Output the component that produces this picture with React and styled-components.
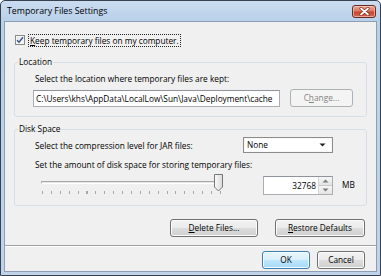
import React from "react";
import styled, { createGlobalStyle, css } from "styled-components";

const Global = createGlobalStyle`
  html, body { margin: 0; padding: 0; background: #ffffff; }
  body {
    font-family: "Open Sans", "Noto Sans", sans-serif;
    font-size: 8.3px;
    color: #000;
  }
  * { box-sizing: border-box; }
`;

const Window = styled.div`
  width: 381px;
  height: 276px;
  border: 1px solid #38414d;
  border-radius: 5px 5px 0 0;
  background: linear-gradient(#cadcf0 0px, #b9d0ea 20px, #bfd4eb 100%);
  padding: 0 3px 3px;
  display: flex;
  flex-direction: column;
  overflow: hidden;
`;

const TitleBar = styled.div`
  height: 20px;
  flex: none;
  display: flex;
  align-items: center;
  justify-content: space-between;
  padding-left: 3px;
`;

const Title = styled.span`
  font-size: 8.8px;
  color: #000;
  line-height: 12px;
`;

const CloseButton = styled.div`
  width: 24px;
  height: 13px;
  margin-right: 1px;
  border: 1px solid #6e2a20;
  border-radius: 3px;
  background: linear-gradient(#e8a898 0%, #d97966 45%, #c5452f 55%, #d16a50 100%);
  box-shadow: inset 0 0 0 1px rgba(255, 220, 210, 0.55);
  display: flex;
  align-items: center;
  justify-content: center;
`;

const Client = styled.div`
  flex: 1;
  background: #f0f0f0;
  border: 1px solid #8e9fb4;
  display: flex;
  flex-direction: column;
`;

const CheckRow = styled.div`
  margin: 11px 0 0 10px;
  height: 14px;
  display: flex;
  align-items: center;
`;

const CheckBox = styled.span`
  width: 10px;
  height: 10px;
  border: 1px solid #8b8b8b;
  background: linear-gradient(135deg, #e2e2e2, #fbfbfb);
  box-shadow: inset 0 0 0 1px #f6f6f6;
  display: flex;
  align-items: center;
  justify-content: center;
  margin-right: 3px;
`;

const FocusLabel = styled.span`
  border: 1px dotted #222;
  padding: 0 1px;
  line-height: 11px;
`;

const Group = styled.fieldset`
  margin: ${(p) => p.$top}px 9px 0;
  border: 1px solid #d5dfe5;
  border-radius: 3px;
  padding: 0 0 ${(p) => p.$bottom}px 0;
  min-width: 0;
`;

const Legend = styled.legend`
  margin-left: 3px;
  padding: 0 1px;
  line-height: 12px;
`;

const GroupBody = styled.div`
  padding-left: 18px;
  display: flex;
  flex-direction: column;
`;

const Line = styled.div`
  margin-top: ${(p) => p.$top || 0}px;
  padding-left: 2px;
  line-height: 12px;
  height: 12px;
  white-space: nowrap;
`;

const FieldRow = styled.div`
  margin-top: 4px;
  display: flex;
  align-items: center;
`;

const TextField = styled.div`
  width: 247px;
  height: 17px;
  border: 1px solid #abadb3;
  border-top-color: #8f949c;
  background: #fff;
  padding-left: 2px;
  line-height: 15px;
  white-space: nowrap;
  overflow: hidden;
`;

const buttonBase = css`
  height: 18px;
  border-radius: 3px;
  display: flex;
  align-items: center;
  justify-content: center;
  line-height: 12px;
  white-space: nowrap;
`;

const Button = styled.div`
  ${buttonBase};
  width: ${(p) => p.$w}px;
  margin-left: ${(p) => p.$ml || 0}px;
  border: 1px solid #707070;
  background: linear-gradient(#f2f2f2 0%, #ebebeb 48%, #dddddd 52%, #cfcfcf 100%);
  box-shadow: inset 0 0 0 1px #fcfcfc;
  color: #000;
  ${(p) =>
    p.$default &&
    css`
      border-color: #3c7fb1;
      background: linear-gradient(#eaf6fd 0%, #d9f0fc 48%, #bee6fd 52%, #a7d9f5 100%);
      box-shadow: inset 0 0 0 1px #f3fbff;
    `}
  ${(p) =>
    p.$disabled &&
    css`
      border-color: #adb2b5;
      background: #f4f4f4;
      box-shadow: none;
      color: #838383;
    `}
`;

const CompressionRow = styled.div`
  margin-top: 2px;
  height: 16px;
  display: flex;
  align-items: center;
`;

const RowLabel = styled.span`
  width: 210px;
  padding-left: 2px;
  white-space: nowrap;
`;

const Select = styled.div`
  width: 90px;
  height: 16px;
  border: 1px solid #8c8c8c;
  background: #fff;
  box-shadow: inset 0 0 0 1px #f8f8f8;
  display: flex;
  align-items: center;
  justify-content: space-between;
  padding: 0 6px 0 3px;
  line-height: 12px;
`;

const SliderRow = styled.div`
  margin-top: 2px;
  height: 22px;
  display: flex;
  align-items: flex-start;
`;

const Slider = styled.div`
  position: relative;
  width: 190px;
  height: 22px;
  margin-left: 5px;
  flex: none;
`;

const Track = styled.div`
  position: absolute;
  left: 3px;
  top: 8px;
  width: 182px;
  height: 3px;
  border-top: 1px solid #a9a9a9;
  border-left: 1px solid #b8b8b8;
  background: #e6e6e6;
  border-bottom: 1px solid #ffffff;
`;

const Ticks = styled.div`
  position: absolute;
  left: 4px;
  top: 18px;
  width: 179px;
  height: 3px;
  background: repeating-linear-gradient(
    to right,
    #a8a8a8 0px,
    #a8a8a8 1px,
    transparent 1px,
    transparent 8.9px
  );
`;

const Thumb = styled.svg`
  position: absolute;
  left: 176px;
  top: 1px;
`;

const Spin = styled.div`
  margin-left: 35px;
  margin-top: 3px;
  width: 70px;
  height: 19px;
  border: 1px solid #abadb3;
  border-top-color: #8f949c;
  background: #fff;
  display: flex;
`;

const SpinValue = styled.div`
  flex: 1;
  text-align: right;
  padding-right: 2px;
  line-height: 17px;
`;

const SpinButtons = styled.div`
  width: 14px;
  display: flex;
  flex-direction: column;
  border-left: 1px solid #d6d6d6;
`;

const SpinHalf = styled.div`
  flex: 1;
  display: flex;
  align-items: center;
  justify-content: center;
  background: linear-gradient(#f6f6f6, #e4e4e4);
  border-bottom: ${(p) => (p.$top ? "1px solid #c8c8c8" : "none")};
`;

const Unit = styled.span`
  margin: 6px 0 0 9px;
  line-height: 12px;
`;

const ActionRow = styled.div`
  margin-top: ${(p) => p.$top}px;
  padding-right: 11px;
  display: flex;
  justify-content: flex-end;
`;

const Separator = styled.div`
  margin-top: 8px;
  border-top: 1px solid #a0a0a0;
  border-bottom: 1px solid #ffffff;
`;

const Check = () => (
  <svg width="8" height="8" viewBox="0 0 8 8">
    <path d="M1 4.2 L3 6.3 L7 1.3" fill="none" stroke="#3a5390" strokeWidth="1.4" />
  </svg>
);

const CloseX = () => (
  <svg width="11" height="9" viewBox="0 0 11 9">
    <path d="M2 1.5 L9 7.5 M9 1.5 L2 7.5" stroke="#7a2a1f" strokeWidth="3" strokeLinecap="round" />
    <path d="M2 1.5 L9 7.5 M9 1.5 L2 7.5" stroke="#ffffff" strokeWidth="1.7" strokeLinecap="round" />
  </svg>
);

const Caret = ({ up, down }) => (
  <svg width="7" height="4" viewBox="0 0 7 4">
    {up && <path d="M0.5 3.5 L3.5 0.5 L6.5 3.5 Z" fill="#7a7a7a" />}
    {down && <path d="M0.5 0.5 L6.5 0.5 L3.5 3.5 Z" fill="#222" />}
  </svg>
);

export default function App() {
  return (
    <>
      <Global />
      <Window>
        <TitleBar>
          <Title>Temporary Files Settings</Title>
          <CloseButton>
            <CloseX />
          </CloseButton>
        </TitleBar>
        <Client>
          <CheckRow>
            <CheckBox>
              <Check />
            </CheckBox>
            <FocusLabel>
              <u>K</u>eep temporary files on my computer.
            </FocusLabel>
          </CheckRow>

          <Group $top={9} $bottom={9}>
            <Legend>Location</Legend>
            <GroupBody>
              <Line $top={5}>Select the location where temporary files are kept:</Line>
              <FieldRow>
                <TextField>{"C:\\Users\\khs\\AppData\\LocalLow\\Sun\\Java\\Deployment\\cache"}</TextField>
                <Button $w={63} $ml={10} $disabled>
                  C<u>h</u>ange...
                </Button>
              </FieldRow>
            </GroupBody>
          </Group>

          <Group $top={6} $bottom={10}>
            <Legend>Disk Space</Legend>
            <GroupBody>
              <CompressionRow>
                <RowLabel>Select the compression level for JAR files:</RowLabel>
                <Select>
                  <span>None</span>
                  <Caret down />
                </Select>
              </CompressionRow>
              <Line $top={6}>Set the amount of disk space for storing temporary files:</Line>
              <SliderRow>
                <Slider>
                  <Track />
                  <Ticks />
                  <Thumb width="9" height="18" viewBox="0 0 9 18">
                    <defs>
                      <linearGradient id="tg" x1="0" y1="0" x2="1" y2="0">
                        <stop offset="0" stopColor="#fbfbfb" />
                        <stop offset="1" stopColor="#dadada" />
                      </linearGradient>
                    </defs>
                    <path d="M0.5 0.5 H8.5 V13 L4.5 17 L0.5 13 Z" fill="url(#tg)" stroke="#777" />
                  </Thumb>
                </Slider>
                <Spin>
                  <SpinValue>32768</SpinValue>
                  <SpinButtons>
                    <SpinHalf $top>
                      <Caret up />
                    </SpinHalf>
                    <SpinHalf>
                      <svg width="7" height="4" viewBox="0 0 7 4">
                        <path d="M0.5 0.5 L6.5 0.5 L3.5 3.5 Z" fill="#7a7a7a" />
                      </svg>
                    </SpinHalf>
                  </SpinButtons>
                </Spin>
                <Unit>MB</Unit>
              </SliderRow>
            </GroupBody>
          </Group>

          <ActionRow $top={13}>
            <Button $w={88}>
              <u>D</u>elete Files...
            </Button>
            <Button $w={90} $ml={17}>
              <u>R</u>estore Defaults
            </Button>
          </ActionRow>

          <Separator />

          <ActionRow $top={4}>
            <Button $w={48} $default>
              OK
            </Button>
            <Button $w={48} $ml={7}>
              Cancel
            </Button>
          </ActionRow>
        </Client>
      </Window>
    </>
  );
}
